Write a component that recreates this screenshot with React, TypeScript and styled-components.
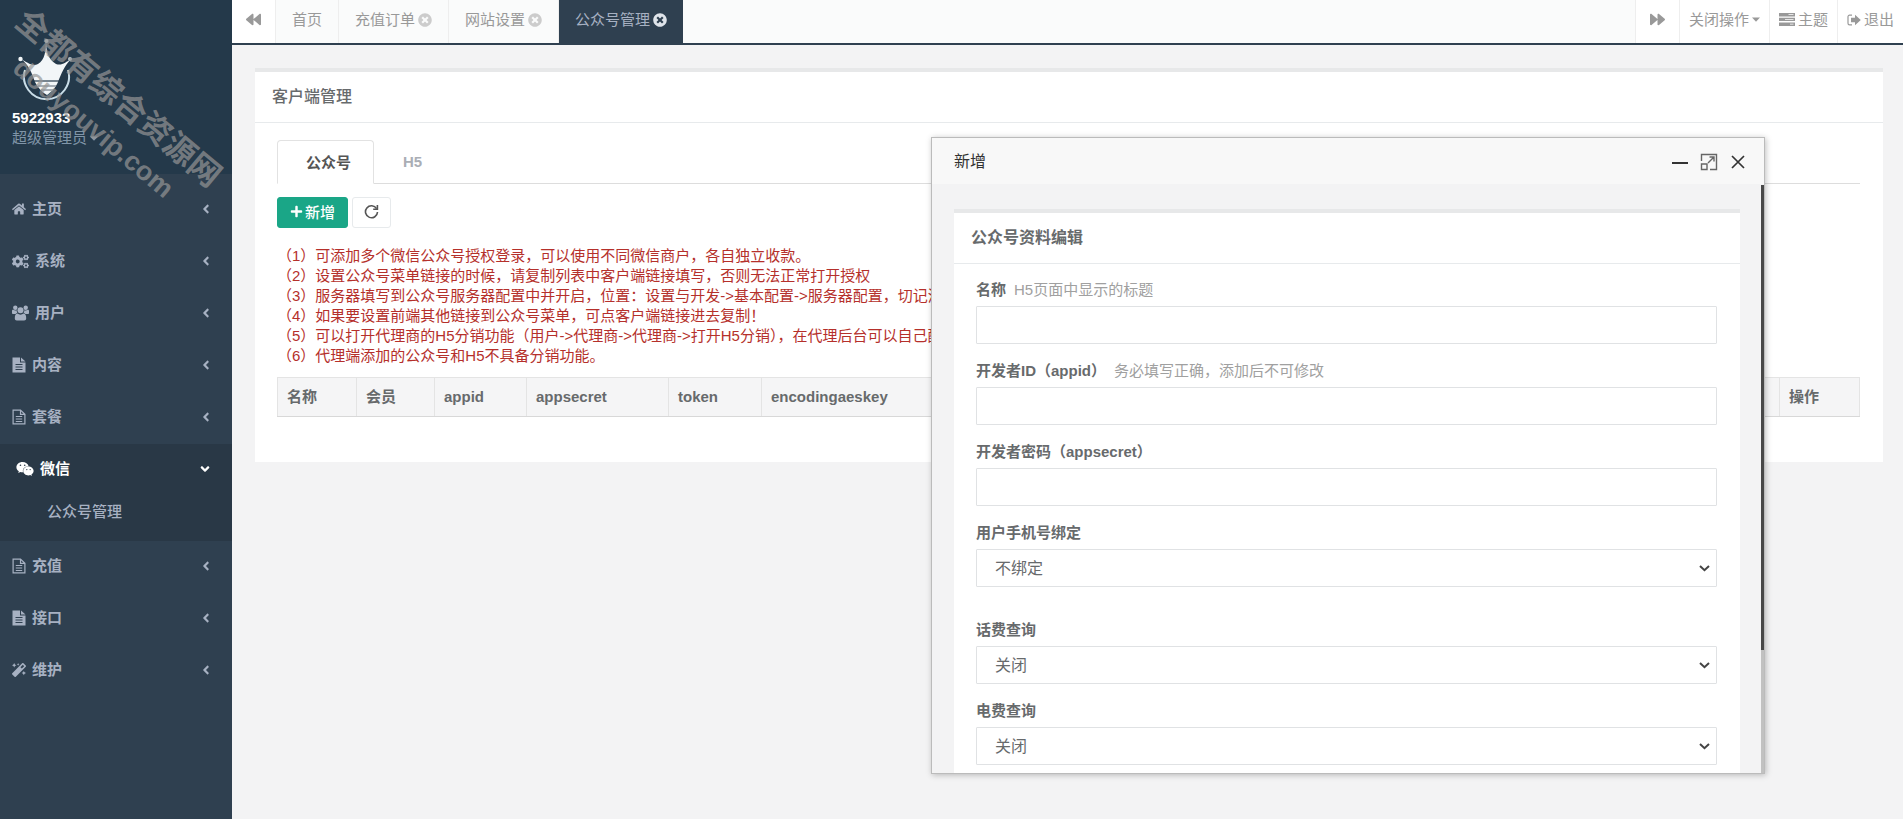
import React from "react";
import styled, { createGlobalStyle, css } from "styled-components";
import {
  FaHome, FaCogs, FaWeixin, FaMagic,
  FaBackward, FaForward, FaTimesCircle, FaPlus, FaAngleLeft, FaAngleDown,
} from "react-icons/fa";

const Global = createGlobalStyle`
  *, *::before, *::after { box-sizing: border-box; }
  body {
    margin: 0;
    background: #f3f3f4;
    color: #676a6c;
    font: 15px/20px "Liberation Sans", "Noto Sans CJK SC", sans-serif;
  }
  button, input, select { font-family: inherit; }
  svg { flex: none; display: block; }
`;

const Layout = styled.div`
  position: relative;
  display: flex;
  min-height: 100vh;
  overflow: hidden;
`;

/* ---------- Sidebar ---------- */
const Sidebar = styled.aside`
  position: relative;
  flex: 0 0 232px;
  background: #2f4050;
  overflow: hidden;
`;
const Profile = styled.header`
  height: 174px;
  padding: 37px 12px 0;
  background: #24394a;
`;
const UserName = styled.strong`
  display: block;
  margin-top: 5px;
  color: #fff;
`;
const RoleButton = styled.button`
  display: flex;
  align-items: center;
  gap: 3px;
  padding: 0;
  border: 0;
  background: none;
  color: #8095a8;
  font-size: 15px;
  line-height: 20px;
`;
const Menu = styled.ul`
  list-style: none;
  margin: 0;
  padding: 10px 0 0;
`;
const MenuEntry = styled.li<{ $active?: boolean }>`
  ${(p) => p.$active && css`
    background: #293846;
    padding-bottom: 19px;
  `}
`;
const MenuLink = styled.a<{ $active?: boolean }>`
  display: flex;
  align-items: center;
  gap: 6px;
  height: 52px;
  padding: 0 ${(p) => (p.$active ? 20 : 19)}px 2px ${(p) => (p.$active ? 16 : 12)}px;
  color: ${(p) => (p.$active ? "#fff" : "#a7b1c2")};
  font-weight: 600;
  text-decoration: none;
`;
const Arrow = styled.span`
  margin-left: auto;
`;
const SubLink = styled.a`
  display: block;
  padding: 6px 0 0 47px;
  color: #a7b1c2;
  font-weight: 500;
  text-decoration: none;
`;
const Watermark = styled.div`
  position: absolute;
  top: 112px;
  left: 107px;
  color: rgba(150, 150, 150, 0.7);
  font-weight: 700;
  white-space: nowrap;
  text-align: center;
  pointer-events: none;
  transform: translate(-50%, -50%) rotate(40deg);
`;
const WatermarkName = styled.div`
  font-size: 32px;
  line-height: 42px;
`;
const WatermarkSite = styled.div`
  font-size: 27px;
  line-height: 36px;
`;

/* ---------- Top bar ---------- */
const Main = styled.main`
  flex: 1;
  min-width: 0;
`;
const TopBar = styled.nav`
  display: flex;
  height: 45px;
  background: #fafbfb;
  border-bottom: 2px solid #2f4050;
`;
const barItem = css`
  display: flex;
  align-items: center;
  height: 43px;
  padding: 0 16px 4px;
  border: 0;
  color: #999;
  font-size: 15px;
  line-height: 20px;
  text-decoration: none;
  white-space: nowrap;
`;
const PageTab = styled.a<{ $active?: boolean }>`
  ${barItem}
  gap: 3px;
  ${(p) => (p.$active ? css`
    height: 45px;
    padding-bottom: 6px;
    background: #2f4050;
    color: #a7b1c2;
    svg { color: #dfe4ea; }
  ` : css`
    border-right: 1px solid #eee;
    svg { color: #ccc; }
  `)}
`;
const BarButton = styled.button<{ $side: "left" | "right"; $wide?: boolean }>`
  ${barItem}
  gap: 3px;
  background: #fff;
  padding-left: ${(p) => (p.$wide ? 9 : 14)}px;
  padding-right: ${(p) => (p.$wide ? 9 : 14)}px;
  ${(p) => (p.$side === "left" ? "border-right" : "border-left")}: 1px solid #eee;
`;
const Spacer = styled.div`
  flex: 1;
`;

/* ---------- Cards ---------- */
const PageBody = styled.div`
  padding: 23px 20px 0 23px;
`;
const Card = styled.section`
  background: #fff;
  border-top: 4px solid #e7e8e9;
`;
const CardTitle = styled.h1`
  margin: 0;
  padding: 15px 17px;
  border-bottom: 1px solid #e7eaec;
  font-size: 16px;
  line-height: 20px;
  font-weight: 500;
`;
const BoldTitle = styled(CardTitle)`
  font-weight: 600;
`;
const CardBody = styled.div`
  padding: 17px 23px 45px 22px;
`;
const TabList = styled.div`
  display: flex;
  border-bottom: 1px solid #ddd;
`;
const Tab = styled.button<{ $active?: boolean }>`
  height: 44px;
  margin-bottom: -1px;
  padding: 0 22px 2px 28px;
  border: 1px solid transparent;
  background: none;
  color: #aaaeb5;
  font-size: 15px;
  font-weight: 600;
  ${(p) => p.$active && css`
    background: #fff;
    border-color: #e2e2e2;
    border-bottom-color: #fff;
    border-radius: 4px 4px 0 0;
    color: #555;
  `}
`;
const Toolbar = styled.div`
  display: flex;
  gap: 4px;
  margin: 13px 0 18px;
`;
const ToolButton = styled.button<{ $primary?: boolean }>`
  display: flex;
  align-items: center;
  gap: 2px;
  height: 31px;
  padding: 0 ${(p) => (p.$primary ? 12 : 11)}px 2px;
  border: 1px solid ${(p) => (p.$primary ? "#1aa687" : "#e7eaec")};
  border-radius: 3px;
  background: ${(p) => (p.$primary ? "#1aa687" : "#fff")};
  color: ${(p) => (p.$primary ? "#fff" : "#555")};
  font-size: 15px;
  font-weight: 500;
`;
const Notes = styled.div`
  color: #b5302b;
  white-space: nowrap;
  overflow: hidden;
`;
const Table = styled.table`
  width: 100%;
  height: 40px;
  margin-top: 11px;
  border-collapse: collapse;
  table-layout: fixed;
  th {
    padding: 0 9px;
    border: 1px solid #e4e4e4;
    border-bottom-color: #d8d8d8;
    background: #f5f5f6;
    text-align: left;
    font-weight: 600;
  }
`;

/* ---------- Dialog ---------- */
const Dialog = styled.section`
  position: absolute;
  top: 137px;
  right: 138px;
  width: 834px;
  height: 637px;
  display: flex;
  flex-direction: column;
  border: 1px solid #bbb;
  background: #f3f3f4;
  box-shadow: 1px 1px 6px rgba(0, 0, 0, 0.25);
`;
const DialogHead = styled.header`
  display: flex;
  align-items: center;
  height: 46px;
  padding: 2px 17px 0 22px;
  background: #f8f8f8;
  color: #333;
  font-size: 16px;
`;
const DialogActions = styled.div`
  display: flex;
  gap: 11px;
  margin-left: auto;
`;
const IconButton = styled.button`
  padding: 0;
  border: 0;
  background: none;
  color: #333;
`;
const DialogBody = styled.div`
  flex: 1;
  min-height: 0;
  padding: 25px 24px 0 22px;
  overflow: hidden;
`;
const ScrollTrack = styled.div`
  position: absolute;
  top: 47px;
  right: 0;
  bottom: 0;
  width: 3px;
  background: #c1c1c1;
`;
const ScrollThumb = styled.div`
  height: 79%;
  background: #484848;
`;
const Form = styled.form`
  padding: 16px 23px 22px 22px;
`;
const Field = styled.div<{ $spaced?: boolean }>`
  margin-bottom: ${(p) => (p.$spaced ? 33 : 17)}px;
`;
const FieldHead = styled.div`
  display: flex;
  gap: 8px;
  margin-bottom: 6px;
  label { font-weight: 600; }
`;
const Hint = styled.span`
  color: #a0a0a0;
`;
const control = css`
  display: block;
  width: 100%;
  height: 38px;
  padding: 0 14px;
  border: 1px solid #e0e2e4;
  border-radius: 1px;
  background: #fff;
  color: #676a6c;
  font-size: 16px;
`;
const TextBox = styled.input`${control}`;
const SelectFrame = styled.div`
  position: relative;
  color: #444;
`;
const Select = styled.select`
  ${control}
  appearance: none;
  padding: 0 30px 0 18px;
`;
const SelectArrow = styled.span`
  position: absolute;
  top: 16px;
  right: 7px;
  pointer-events: none;
`;

/* ---------- Drawings ---------- */
const CrownLogo = () => (
  <svg width="60" height="66" viewBox="0 0 60 66" aria-hidden="true">
    <path d="M34 2C34 15 36 22 44 27C50 29 54 25 59 22C53 28 49 37 46 45C43 52 38 56 35 58C31 56 26 51 23 45C20 36 16 27 9 22C15 25 20 30 26 27C33 23 34 14 34 2Z" fill="#f2f6f8" />
    <circle cx="34.500" cy="4" r="2" fill="#b6c3cc" />
    <circle cx="8.500" cy="22" r="2.200" fill="#f2f6f8" />
    <circle cx="58" cy="22" r="2" fill="#b6c3cc" />
    <path d="M13 33a22.500 22.500 0 1 0 43 0" fill="none" stroke="#c9dde8" strokeWidth="2" />
    <path d="M21 44h28" stroke="#24394a" strokeWidth="1.200" />
    <path d="M26 49h18M29 53h12" stroke="#8d979e" strokeWidth="1.500" />
  </svg>
);
const Caret = () => (
  <svg width="8" height="5" viewBox="0 0 8 5" fill="currentColor" aria-hidden="true">
    <path d="M0 .5h8L4 4.800z" />
  </svg>
);
const FileSolid = () => (
  <svg width="14" height="16" viewBox="0 0 14 16" aria-hidden="true">
    <path d="M.5 0.500h7.500v5h5.500v10H.5zM9 .5l4.500 4H9z" fill="currentColor" />
    <path d="M3.500 7.500h7M3.500 10h7M3.500 12.500h7" stroke="#2f4050" strokeWidth="1" />
  </svg>
);
const FileOutline = () => (
  <svg width="14" height="16" viewBox="0 0 14 16" fill="none" stroke="currentColor" strokeWidth="1.200" aria-hidden="true">
    <path d="M1.100 1.100h7.400l4.400 4.200v9.600H1.100zM8.500 1.100v4.300h4.400" />
    <path d="M3.800 7.500h6.400M3.800 10h6.400M3.800 12.500h6.400" strokeWidth="1" />
  </svg>
);
const GroupIcon = () => (
  <svg width="17" height="16" viewBox="0 0 17 16" fill="currentColor" aria-hidden="true">
    <circle cx="3.300" cy="2.800" r="2.200" />
    <circle cx="13.700" cy="2.800" r="2.200" />
    <path d="M0 8.300V6.200C0 5 .8 4.600 1.600 5c1 .6 2.300.6 3.200.2-.2 1.200.1 2 .7 2.900-.7 0-1.400.3-1.900.9H1C.3 9 0 8.700 0 8.300zM17 8.300V6.200c0-1.200-.8-1.600-1.600-1.200-1 .6-2.300.6-3.200.2.2 1.200-.1 2-.7 2.900.7 0 1.400.3 1.900.9H16c.7 0 1-.3 1-.7z" />
    <circle cx="8.500" cy="5.300" r="3" />
    <path d="M2.800 13.500c0-2.500.6-4.900 2.600-4.900 1.900 1.400 4.300 1.400 6.200 0 2 0 2.600 2.400 2.600 4.900 0 1.300-.9 2-2 2H4.800c-1.200 0-2-.7-2-2z" />
  </svg>
);
const ReloadIcon = () => (
  <svg width="15" height="15" viewBox="0 0 15 15" fill="none" stroke="currentColor" strokeWidth="1.600" aria-hidden="true">
    <path d="M12.600 4.600A6 6 0 1 0 13.500 8" />
    <path d="M13.400 1v4.200H9.200" />
  </svg>
);
const ThemeIcon = () => (
  <svg width="16" height="13" viewBox="0 0 16 13" fill="currentColor" aria-hidden="true">
    <path d="M0 0h16v3.400H0zM0 4.700h16v3.400H0zM0 9.500h16v3.400H0z" />
    <path d="M9.500 1.300h5v.8h-5zM6 6h8.500v.8H6zM11 10.800h3.500v.8H11z" fill="#fff" />
  </svg>
);
const SignOutIcon = () => (
  <svg width="14" height="12" viewBox="0 0 14 12" fill="currentColor" aria-hidden="true">
    <path d="M5 1.200H2.600A1.600 1.600 0 0 0 1 2.800v6.400a1.600 1.600 0 0 0 1.600 1.600H5" fill="none" stroke="currentColor" strokeWidth="1.200" />
    <path d="M8 .8 13.800 6 8 11.200V8.200H4V3.800h4z" />
  </svg>
);
const ChevronIcon = () => (
  <svg width="11" height="7" viewBox="0 0 11 7" fill="none" stroke="currentColor" strokeWidth="2" aria-hidden="true">
    <path d="M1 1l4.500 4.200L10 1" />
  </svg>
);
const MinusIcon = () => (
  <svg width="18" height="18" viewBox="0 0 18 18" stroke="currentColor" strokeWidth="2" aria-hidden="true">
    <path d="M1 10h16" />
  </svg>
);
const ExpandIcon = () => (
  <svg width="18" height="18" viewBox="0 0 18 18" fill="none" stroke="#666" strokeWidth="1.400" aria-hidden="true">
    <path d="M1.500 8V1.500h15v15H10M1.500 11h5.500v5.500H1.500zM8 10l5.500-5.500M9.500 4h4.500v4.500" />
  </svg>
);
const CloseIcon = () => (
  <svg width="18" height="18" viewBox="0 0 18 18" stroke="currentColor" strokeWidth="1.700" aria-hidden="true">
    <path d="M3 3l12 12M15 3L3 15" />
  </svg>
);

/* ---------- Content ---------- */
const before = [
  { label: "主页", icon: <FaHome size={14} /> },
  { label: "系统", icon: <FaCogs size={17} /> },
  { label: "用户", icon: <GroupIcon /> },
  { label: "内容", icon: <FileSolid /> },
  { label: "套餐", icon: <FileOutline /> },
];
const after = [
  { label: "充值", icon: <FileOutline /> },
  { label: "接口", icon: <FileSolid /> },
  { label: "维护", icon: <FaMagic size={14} /> },
];
const notes = [
  "（1）可添加多个微信公众号授权登录，可以使用不同微信商户，各自独立收款。",
  "（2）设置公众号菜单链接的时候，请复制列表中客户端链接填写，否则无法正常打开授权",
  "（3）服务器填写到公众号服务器配置中并开启，位置：设置与开发->基本配置->服务器配置，切记消息",
  "（4）如果要设置前端其他链接到公众号菜单，可点客户端链接进去复制！",
  "（5）可以打开代理商的H5分销功能（用户->代理商->代理商->打开H5分销），在代理后台可以自己配",
  "（6）代理端添加的公众号和H5不具备分销功能。",
];
const columns = [
  { name: "名称", width: 79 },
  { name: "会员", width: 78 },
  { name: "appid", width: 92 },
  { name: "appsecret", width: 142 },
  { name: "token", width: 93 },
  { name: "encodingaeskey", width: undefined },
  { name: "操作", width: 80 },
];

const MenuItems = ({ items }: { items: typeof before }) => (
  <>
    {items.map((item) => (
      <MenuEntry key={item.label}>
        <MenuLink href="#">
          {item.icon}
          {item.label}
          <Arrow><FaAngleLeft size={14} /></Arrow>
        </MenuLink>
      </MenuEntry>
    ))}
  </>
);

const SelectField = ({ id, label, value, spaced }: { id: string; label: string; value: string; spaced?: boolean }) => (
  <Field $spaced={spaced}>
    <FieldHead><label htmlFor={id}>{label}</label></FieldHead>
    <SelectFrame>
      <Select id={id}><option>{value}</option></Select>
      <SelectArrow><ChevronIcon /></SelectArrow>
    </SelectFrame>
  </Field>
);

const TextField = ({ id, label, hint }: { id: string; label: string; hint?: string }) => (
  <Field>
    <FieldHead>
      <label htmlFor={id}>{label}</label>
      {hint && <Hint>{hint}</Hint>}
    </FieldHead>
    <TextBox id={id} type="text" />
  </Field>
);

export default function App() {
  return (
    <Layout lang="zh-CN">
      <Global />
      <Sidebar>
        <Profile>
          <CrownLogo />
          <UserName>5922933</UserName>
          <RoleButton>超级管理员<Caret /></RoleButton>
        </Profile>
        <Menu>
          <MenuItems items={before} />
          <MenuEntry $active>
            <MenuLink href="#" $active>
              <FaWeixin size={18} />
              微信
              <Arrow><FaAngleDown size={14} /></Arrow>
            </MenuLink>
            <SubLink href="#">公众号管理</SubLink>
          </MenuEntry>
          <MenuItems items={after} />
        </Menu>
        <Watermark>
          <WatermarkName>全都有综合资源网</WatermarkName>
          <WatermarkSite>douyouvip.com</WatermarkSite>
        </Watermark>
      </Sidebar>

      <Main>
        <TopBar>
          <BarButton $side="left" aria-label="向左"><FaBackward size={15} /></BarButton>
          <PageTab href="#">首页</PageTab>
          <PageTab href="#">充值订单<FaTimesCircle size={14} /></PageTab>
          <PageTab href="#">网站设置<FaTimesCircle size={14} /></PageTab>
          <PageTab href="#" $active>公众号管理<FaTimesCircle size={14} /></PageTab>
          <Spacer />
          <BarButton $side="right" aria-label="向右"><FaForward size={15} /></BarButton>
          <BarButton $side="right" $wide>关闭操作<Caret /></BarButton>
          <BarButton $side="right" $wide><ThemeIcon />主题</BarButton>
          <BarButton $side="right" $wide><SignOutIcon />退出</BarButton>
        </TopBar>

        <PageBody>
          <Card>
            <CardTitle>客户端管理</CardTitle>
            <CardBody>
              <TabList role="tablist">
                <Tab role="tab" aria-selected="true" $active>公众号</Tab>
                <Tab role="tab" aria-selected="false">H5</Tab>
              </TabList>
              <Toolbar>
                <ToolButton $primary><FaPlus size={13} />新增</ToolButton>
                <ToolButton aria-label="刷新"><ReloadIcon /></ToolButton>
              </Toolbar>
              <Notes>
                {notes.map((line) => <div key={line}>{line}</div>)}
              </Notes>
              <Table>
                <colgroup>
                  {columns.map((c) => <col key={c.name} width={c.width} />)}
                </colgroup>
                <thead>
                  <tr>{columns.map((c) => <th key={c.name} scope="col">{c.name}</th>)}</tr>
                </thead>
              </Table>
            </CardBody>
          </Card>
        </PageBody>
      </Main>

      <Dialog role="dialog" aria-label="新增">
        <DialogHead>
          新增
          <DialogActions>
            <IconButton aria-label="最小化"><MinusIcon /></IconButton>
            <IconButton aria-label="最大化"><ExpandIcon /></IconButton>
            <IconButton aria-label="关闭"><CloseIcon /></IconButton>
          </DialogActions>
        </DialogHead>
        <DialogBody>
          <Card>
            <BoldTitle as="h2">公众号资料编辑</BoldTitle>
            <Form>
              <TextField id="name" label="名称" hint="H5页面中显示的标题" />
              <TextField id="appid" label="开发者ID（appid）" hint="务必填写正确，添加后不可修改" />
              <TextField id="appsecret" label="开发者密码（appsecret）" />
              <SelectField id="phone-bind" label="用户手机号绑定" value="不绑定" spaced />
              <SelectField id="phone-fee" label="话费查询" value="关闭" />
              <SelectField id="power-fee" label="电费查询" value="关闭" />
            </Form>
          </Card>
        </DialogBody>
        <ScrollTrack><ScrollThumb /></ScrollTrack>
      </Dialog>
    </Layout>
  );
}
